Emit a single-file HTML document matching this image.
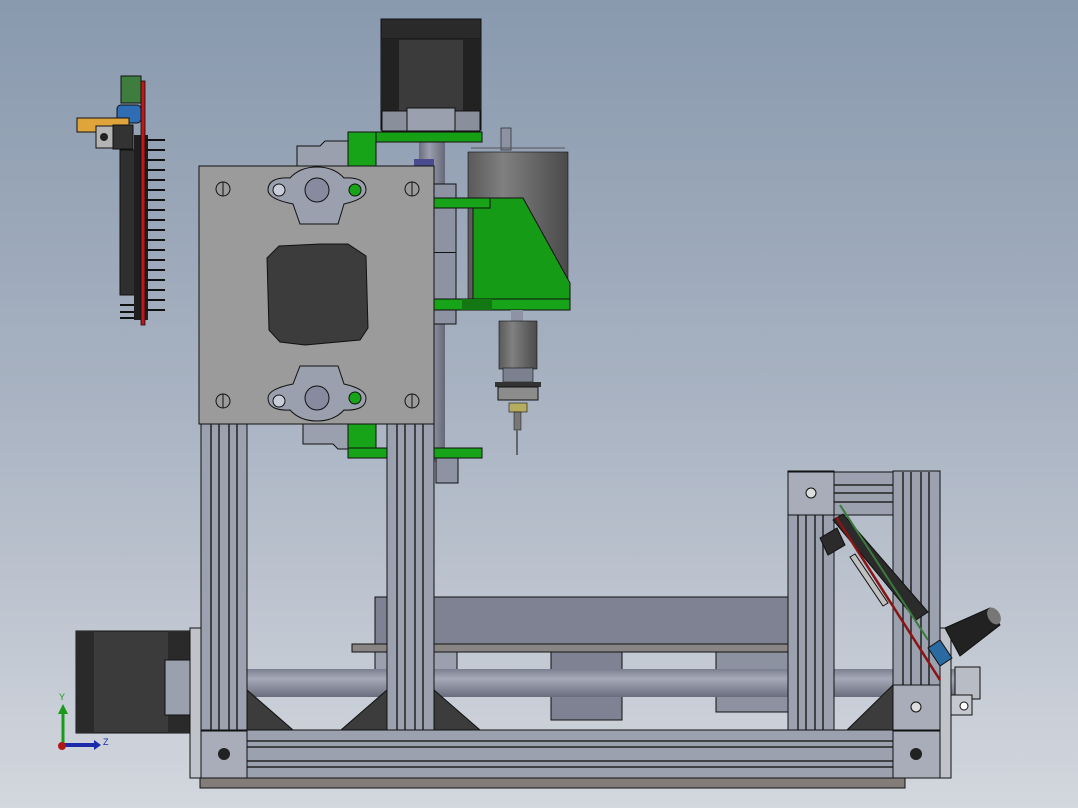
<!DOCTYPE html>
<html><head><meta charset="utf-8"><style>
html,body{margin:0;padding:0;width:1078px;height:808px;overflow:hidden}
svg{display:block}
text{font-family:"Liberation Sans",sans-serif}
</style></head><body>
<svg width="1078" height="808" viewBox="0 0 1078 808" xmlns="http://www.w3.org/2000/svg">
<defs>
<linearGradient id="bg" x1="0" y1="0" x2="0" y2="1">
<stop offset="0" stop-color="#8999ae"/><stop offset="0.5" stop-color="#a9b3c2"/><stop offset="1" stop-color="#d3d7de"/></linearGradient>
<linearGradient id="cyl" x1="0" y1="0" x2="1" y2="0">
<stop offset="0" stop-color="#5a5a5a"/><stop offset="0.35" stop-color="#808080"/><stop offset="1" stop-color="#4a4a4a"/></linearGradient>
<linearGradient id="rod" x1="0" y1="0" x2="0" y2="1">
<stop offset="0" stop-color="#7a7f90"/><stop offset="0.35" stop-color="#a6aab8"/><stop offset="1" stop-color="#686c7c"/></linearGradient>
<linearGradient id="vrod" x1="0" y1="0" x2="1" y2="0">
<stop offset="0" stop-color="#6a6e7e"/><stop offset="0.4" stop-color="#9a9eac"/><stop offset="1" stop-color="#646878"/></linearGradient>
<g id="col">
<rect x="0" y="0" width="46" height="10" fill="#9ba1ae" stroke="#111" stroke-width="1"/>
</g>
</defs>
<rect width="1078" height="808" fill="url(#bg)"/>

<!-- electronics board -->
<rect x="121" y="76" width="20" height="27" fill="#3e7d3e" stroke="#111"/>
<rect x="117" y="105" width="24" height="18" rx="4" fill="#2f6db5" stroke="#111"/>
<rect x="77" y="118" width="52" height="14" fill="#e0a53a" stroke="#111"/>
<rect x="96" y="126" width="18" height="22" fill="#b4b4b4" stroke="#111"/>
<circle cx="104" cy="137" r="4" fill="#222"/>
<rect x="113" y="125" width="20" height="24" fill="#333" stroke="#111"/>
<rect x="120" y="150" width="20" height="145" fill="#2f2f2f" stroke="#111"/>
<rect x="134" y="135" width="14" height="185" fill="#1f1f1f"/>
<g stroke="#111" stroke-width="2">
<line x1="146" y1="140" x2="165" y2="140"/><line x1="146" y1="150" x2="165" y2="150"/><line x1="146" y1="160" x2="165" y2="160"/>
<line x1="146" y1="170" x2="165" y2="170"/><line x1="146" y1="180" x2="165" y2="180"/><line x1="146" y1="190" x2="165" y2="190"/>
<line x1="146" y1="200" x2="165" y2="200"/><line x1="146" y1="210" x2="165" y2="210"/><line x1="146" y1="220" x2="165" y2="220"/>
<line x1="146" y1="230" x2="165" y2="230"/><line x1="146" y1="240" x2="165" y2="240"/><line x1="146" y1="250" x2="165" y2="250"/>
<line x1="146" y1="260" x2="165" y2="260"/><line x1="146" y1="270" x2="165" y2="270"/><line x1="146" y1="280" x2="165" y2="280"/>
<line x1="146" y1="290" x2="165" y2="290"/><line x1="146" y1="300" x2="165" y2="300"/><line x1="146" y1="310" x2="165" y2="310"/>
<line x1="120" y1="305" x2="134" y2="305"/><line x1="120" y1="312" x2="134" y2="312"/><line x1="120" y1="318" x2="134" y2="318"/>
</g>
<rect x="141" y="81" width="4" height="244" fill="#c01818" stroke="#111" stroke-width="0.8"/>

<!-- top stepper -->
<rect x="381" y="19" width="100" height="111" fill="#3b3b3b" stroke="#111"/>
<rect x="381" y="19" width="100" height="20" fill="#2a2a2a" stroke="#111"/>
<rect x="381" y="39" width="18" height="72" fill="#222"/>
<rect x="463" y="39" width="18" height="72" fill="#222"/>
<rect x="382" y="111" width="98" height="20" fill="#8a8f9c" stroke="#111"/>
<rect x="407" y="108" width="48" height="23" fill="#9aa0ad" stroke="#111"/>
<!-- vertical lead screw -->
<rect x="419" y="142" width="26" height="320" fill="url(#vrod)"/>
<rect x="414" y="159" width="20" height="30" fill="#4a4a90"/>
<!-- gray back part -->
<path d="M297 166 V146 H320 L325 141 H348 V166 Z" fill="#9aa0ad" stroke="#111"/>
<path d="M303 424 V444 H333 L338 449 H376 V424 Z" fill="#9aa0ad" stroke="#111"/>
<!-- top green -->
<rect x="348" y="132" width="134" height="10" fill="#16a016" stroke="#111"/>
<rect x="348" y="132" width="28" height="34" fill="#18a418" stroke="#111"/>
<!-- rails behind -->
<rect x="434" y="184" width="22" height="140" fill="#8d93a3" stroke="#111"/>
<rect x="434" y="252" width="22" height="1" fill="#111"/>
<!-- spindle cylinder -->
<rect x="501" y="128" width="10" height="22" fill="#8d93a3" stroke="#111" stroke-width="0.6"/>
<rect x="468" y="152" width="100" height="150" fill="url(#cyl)" stroke="#111" stroke-width="0.6"/>
<line x1="471" y1="148" x2="565" y2="148" stroke="#555"/>
<!-- green bracket -->
<path d="M473 198 H523 L570 283 V300 H473 Z" fill="#169b16" stroke="#111"/>
<rect x="434" y="198" width="56" height="10" fill="#18a418" stroke="#111"/>
<rect x="434" y="299" width="136" height="11" fill="#18a418" stroke="#111"/>
<rect x="462" y="299" width="30" height="11" fill="#137813"/>
<!-- spindle below -->
<rect x="511" y="310" width="12" height="12" fill="#8d93a3"/>
<rect x="499" y="321" width="38" height="48" fill="url(#cyl)" stroke="#111" stroke-width="0.6"/>
<rect x="503" y="368" width="30" height="14" fill="#7c8190" stroke="#111" stroke-width="0.6"/>
<rect x="495" y="382" width="46" height="5" fill="#333"/>
<rect x="498" y="387" width="40" height="13" fill="#8c8c8c" stroke="#111"/>
<rect x="509" y="403" width="18" height="9" fill="#b5ac60" stroke="#111" stroke-width="0.6"/>
<rect x="514" y="412" width="7" height="18" fill="#777" stroke="#111" stroke-width="0.5"/>
<rect x="516" y="430" width="2" height="25" fill="#666"/>

<!-- main plate -->
<rect x="199" y="166" width="235" height="258" fill="#9b9b9b" stroke="#111"/>
<path d="M279 246 L320 244 L348 244 L366 256 L368 328 L360 340 L305 345 L280 342 L269 330 L267 258 Z" fill="#3c3c3c" stroke="#111"/>
<g fill="#9aa0ad" stroke="#111">
<path d="M268 190 Q268 177 290 178 Q300 167 317 167 Q334 167 344 178 Q366 177 366 190 Q366 199 344 204 L338 224 L300 224 L293 204 Q268 199 268 190 Z"/>
<circle cx="317" cy="190" r="12" fill="#878ba0"/>
<path d="M268 398 Q268 411 290 410 Q300 421 317 421 Q334 421 344 410 Q366 411 366 398 Q366 389 344 384 L338 366 L300 366 L293 384 Q268 389 268 398 Z"/>
<circle cx="317" cy="398" r="12" fill="#878ba0"/>
</g>
<circle cx="279" cy="190" r="6" fill="#c8ccd8" stroke="#111"/>
<circle cx="355" cy="190" r="6" fill="#18a418" stroke="#111"/>
<circle cx="279" cy="401" r="6" fill="#c8ccd8" stroke="#111"/>
<circle cx="355" cy="398" r="6" fill="#18a418" stroke="#111"/>
<g fill="#9b9b9b" stroke="#111">
<circle cx="223" cy="189" r="7"/><circle cx="412" cy="189" r="7"/><circle cx="223" cy="401" r="7"/><circle cx="412" cy="401" r="7"/>
</g>
<g stroke="#111"><line x1="223" y1="182" x2="223" y2="196"/><line x1="412" y1="182" x2="412" y2="196"/><line x1="223" y1="394" x2="223" y2="408"/><line x1="412" y1="394" x2="412" y2="408"/></g>

<!-- lower green -->
<rect x="348" y="424" width="28" height="34" fill="#18a418" stroke="#111"/>
<rect x="348" y="448" width="134" height="10" fill="#18a418" stroke="#111"/>
<rect x="436" y="458" width="22" height="25" fill="#8d93a3" stroke="#111"/>

<!-- table -->
<rect x="375" y="597" width="413" height="48" fill="#7e8292" stroke="#111"/>
<rect x="352" y="644" width="436" height="8" fill="#8a8585" stroke="#111"/>
<rect x="551" y="652" width="71" height="68" fill="#7e8292" stroke="#111"/>
<rect x="716" y="652" width="72" height="60" fill="#8c92a0" stroke="#111"/>
<rect x="375" y="652" width="82" height="34" fill="#9aa0ad" stroke="#111"/>
<!-- rod -->
<rect x="160" y="669" width="820" height="28" fill="url(#rod)"/>
<rect x="155" y="667" width="28" height="32" fill="#b8bcc4" stroke="#111"/>
<rect x="955" y="667" width="25" height="32" fill="#b8bcc4" stroke="#111"/>
<rect x="946" y="695" width="26" height="20" fill="#c5c8ce" stroke="#111"/>
<circle cx="964" cy="706" r="4" fill="#fff" stroke="#111"/>
<!-- left stepper -->
<rect x="76" y="631" width="114" height="102" fill="#3b3b3b" stroke="#111"/>
<rect x="76" y="631" width="18" height="102" fill="#2a2a2a"/>
<rect x="168" y="631" width="22" height="102" fill="#2a2a2a"/>
<rect x="165" y="660" width="25" height="55" fill="#9aa0ad" stroke="#111"/>
<rect x="190" y="628" width="11" height="150" fill="#c0c3c9" stroke="#111"/>
<rect x="940" y="628" width="11" height="150" fill="#c0c3c9" stroke="#111"/>

<!-- gussets -->
<g fill="#3c3c3c" stroke="#111">
<path d="M247 690 L293 730 H247 Z"/>
<path d="M387 690 V730 H341 Z"/>
<path d="M434 690 L480 730 H434 Z"/>
<path d="M893 685 V730 H847 Z"/>
</g>

<!-- columns -->
<g fill="#9ba1ae" stroke="#111">
<rect x="201" y="424" width="46" height="310"/>
<rect x="387" y="424" width="47" height="310"/>
<rect x="788" y="471" width="46" height="262"/>
<rect x="893" y="471" width="47" height="262"/>
<rect x="834" y="472" width="59" height="43"/>
</g>
<g stroke="#222" stroke-width="1.5">
<line x1="211" y1="424" x2="211" y2="730"/><line x1="219" y1="424" x2="219" y2="730"/><line x1="229" y1="424" x2="229" y2="730"/><line x1="237" y1="424" x2="237" y2="730"/>
<line x1="397" y1="424" x2="397" y2="730"/><line x1="405" y1="424" x2="405" y2="730"/><line x1="415" y1="424" x2="415" y2="730"/><line x1="423" y1="424" x2="423" y2="730"/>
<line x1="798" y1="515" x2="798" y2="730"/><line x1="806" y1="515" x2="806" y2="730"/><line x1="815" y1="515" x2="815" y2="730"/><line x1="823" y1="515" x2="823" y2="730"/>
<line x1="903" y1="472" x2="903" y2="685"/><line x1="911" y1="472" x2="911" y2="685"/><line x1="921" y1="472" x2="921" y2="685"/><line x1="929" y1="472" x2="929" y2="685"/>
<line x1="834" y1="485" x2="893" y2="485"/><line x1="834" y1="493" x2="893" y2="493"/><line x1="834" y1="502" x2="893" y2="502"/>
</g>
<!-- bottom beam -->
<rect x="201" y="730" width="739" height="48" fill="#9ba1ae" stroke="#111"/>
<g stroke="#222" stroke-width="1.5">
<line x1="247" y1="741" x2="893" y2="741"/><line x1="247" y1="747" x2="893" y2="747"/><line x1="247" y1="761" x2="893" y2="761"/><line x1="247" y1="767" x2="893" y2="767"/>
</g>
<rect x="200" y="778" width="705" height="10" fill="#827d78" stroke="#111"/>
<!-- profile ends -->
<g fill="#a8adb9" stroke="#111">
<rect x="201" y="731" width="46" height="47"/>
<rect x="893" y="731" width="47" height="47"/>
<rect x="788" y="472" width="46" height="43"/>
<rect x="893" y="685" width="47" height="45"/>
</g>
<g fill="#222">
<circle cx="224" cy="754" r="6"/><circle cx="916" cy="754" r="6"/>
</g>
<g fill="#ddd" stroke="#111"><circle cx="811" cy="493" r="5"/><circle cx="916" cy="707" r="5"/></g>

<!-- display -->
<path d="M833 520 L843 514 L928 612 L916 620 Z" fill="#2b2b2b" stroke="#111"/>
<path d="M820 538 L837 528 L845 545 L828 555 Z" fill="#2b2b2b" stroke="#111"/>
<path d="M850 557 L855 554 L888 603 L883 606 Z" fill="#c0c0c0" stroke="#111"/>
<line x1="836" y1="517" x2="940" y2="680" stroke="#8a1414" stroke-width="2.5"/>
<line x1="840" y1="505" x2="928" y2="640" stroke="#3a7a3a" stroke-width="2"/>
<path d="M928 648 L940 640 L952 658 L940 666 Z" fill="#2a6aa0" stroke="#111"/>
<path d="M945 628 L990 608 L1000 625 L960 656 Z" fill="#222" stroke="#111"/>
<ellipse cx="994" cy="616" rx="6" ry="9" fill="#777" transform="rotate(-30 994 616)"/>

<!-- axis triad -->
<line x1="63" y1="745" x2="63" y2="712" stroke="#1a9a1a" stroke-width="3"/>
<path d="M58 714 L63 704 L68 714 Z" fill="#1a9a1a"/>
<line x1="63" y1="745" x2="95" y2="745" stroke="#1a2aaa" stroke-width="4"/>
<path d="M94 740 L101 745 L94 750 Z" fill="#1a2aaa"/>
<circle cx="62" cy="746" r="4" fill="#b01818"/>
<text x="59" y="700" font-size="9" fill="#1a9a1a">Y</text>
<text x="103" y="745" font-size="9" fill="#1a2aaa">Z</text>
</svg>
</body></html>
